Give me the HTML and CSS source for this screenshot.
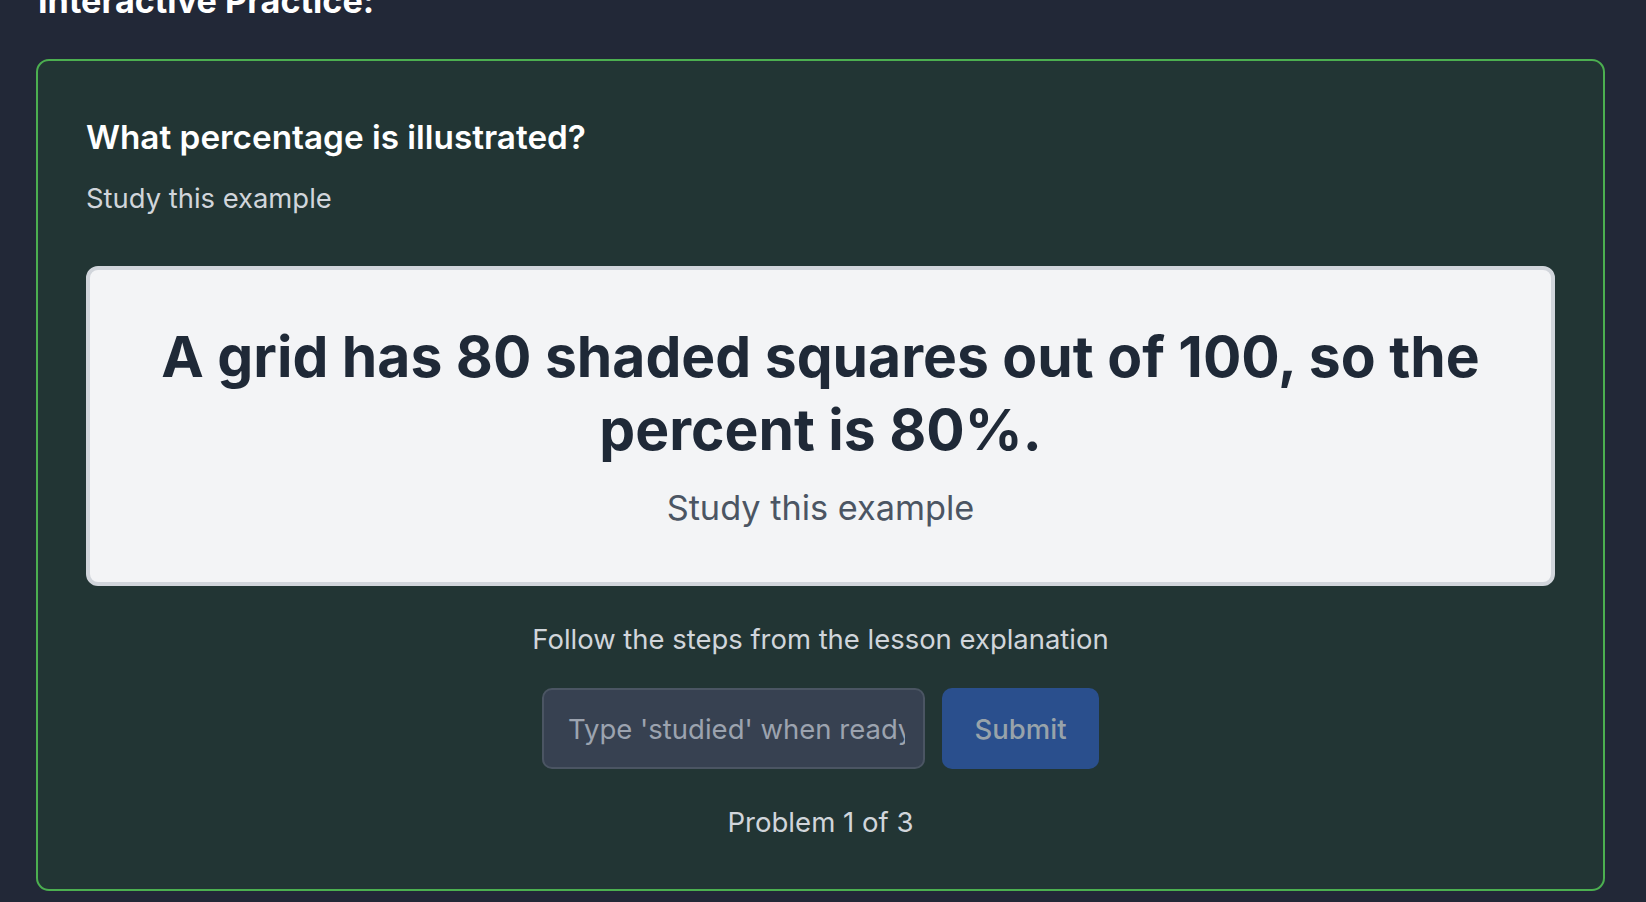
FILE: index.html
```html
<!DOCTYPE html>
<html lang="en">
<head>
<meta charset="utf-8">
<title>Interactive Practice</title>
<link rel="stylesheet" href="styles.css">
</head>
<body>
<main class="page">
  <h2 class="section-title">Interactive Practice:</h2>
  <section class="practice-card">
    <h3 class="problem-title">What percentage is illustrated?</h3>
    <p class="problem-sub">Study this example</p>
    <div class="example-box">
      <p class="example-main">A grid has 80 shaded squares out of 100, so the percent is 80%.</p>
      <p class="example-note">Study this example</p>
    </div>
    <p class="hint">Follow the steps from the lesson explanation</p>
    <form class="answer-row">
      <input class="answer-input" type="text" placeholder="Type 'studied' when ready">
      <button class="submit-btn" type="button">Submit</button>
    </form>
    <p class="progress">Problem 1 of 3</p>
  </section>
</main>
</body>
</html>
```
FILE: styles.css
```css
* {
  box-sizing: border-box;
}

html, body {
  margin: 0;
  padding: 0;
  background: #222837;
  overflow: hidden;
}

body {
  font-family: Inter, "Noto Sans", "Liberation Sans", sans-serif;
  color: #ffffff;
}

.page {
  padding: 0 41px 0 36px;
}

.section-title {
  margin: -19px 0 38px 2px;
  font-size: 34.2px;
  line-height: 40px;
  font-weight: 700;
  color: #ffffff;
}

.practice-card {
  border: 2px solid #4caf50;
  border-radius: 13px;
  background: #223534;
  padding: 56px 48px 49px 48px;
  display: flex;
  flex-direction: column;
}

.problem-title {
  margin: 0;
  font-size: 33.3px;
  line-height: 41px;
  font-weight: 600;
  color: #ffffff;
}

.problem-sub {
  margin: 22px 0 0 0;
  font-size: 27.4px;
  line-height: 36px;
  color: #d1d5db;
}

.example-box {
  margin-top: 50px;
  background: #f3f4f6;
  border: 4px solid #d1d5db;
  border-radius: 12px;
  padding: 50px 48px 54px 48px;
  text-align: center;
}

.example-main {
  margin: 0;
  font-size: 57px;
  line-height: 73px;
  font-weight: 700;
  color: #1f2937;
}

.example-note {
  margin: 22px 0 0 0;
  font-size: 34.3px;
  line-height: 40px;
  color: #4b5563;
}

.hint {
  margin: 35px 0 0 0;
  text-align: center;
  font-size: 27.45px;
  line-height: 36px;
  color: #d1d5db;
}

.answer-row {
  margin: 31px 0 0 0;
  display: flex;
  justify-content: center;
  gap: 17px;
}

.answer-input {
  width: 383px;
  height: 81px;
  background: #374151;
  border: 2px solid #4b5563;
  border-radius: 10px;
  padding: 0 18px 0 24px;
  font-family: inherit;
  font-size: 27.5px;
  color: #ffffff;
  outline: none;
}

.answer-input::placeholder {
  color: #9ca3af;
}

.submit-btn {
  width: 157px;
  height: 81px;
  border: none;
  border-radius: 10px;
  background: #2a4f8d;
  color: #98a3aa;
  font-family: inherit;
  font-size: 27.5px;
  font-weight: 500;
  padding: 0;
}

.progress {
  margin: 35px 0 0 0;
  text-align: center;
  font-size: 27.6px;
  line-height: 36px;
  color: #d1d5db;
}
```
